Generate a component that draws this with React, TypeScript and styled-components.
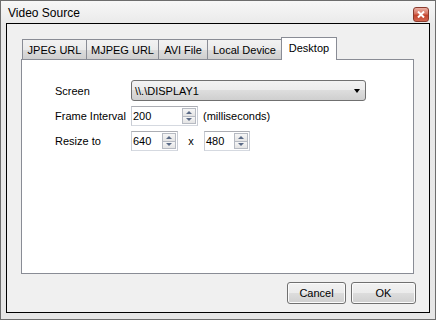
import React from "react"
import styled, { createGlobalStyle } from "styled-components"

const GlobalStyle = createGlobalStyle`
    html, body {
        margin: 0;
        padding: 0;
    }
    body {
        font-family: "Liberation Sans", Arial, sans-serif;
        font-size: 11px;
        color: #000;
    }
`

const Window = styled.div`
    width: 436px;
    height: 320px;
    box-sizing: border-box;
    border: 1px solid #6d6d6d;
    background: linear-gradient(#f7f7f7, #e9e9e9 24px, #e6e6e6);
    display: flex;
    flex-direction: column;
`
const TitleBar = styled.div`
    height: 22px;
    box-sizing: border-box;
    display: flex;
    align-items: flex-start;
    justify-content: space-between;
    padding: 5px 6px 0 7px;
    font-size: 12px;
`
const CloseButton = styled.div`
    width: 16px;
    height: 15px;
    margin-top: 1px;
    box-sizing: border-box;
    border: 1px solid #8a3b2e;
    border-radius: 3px;
    background: linear-gradient(#eab0a4, #d6705e 45%, #c3432c 55%, #d2654f);
    display: flex;
    align-items: center;
    justify-content: center;
`
const Client = styled.div`
    flex: 1;
    margin: 0 5px 6px 5px;
    border: 1px solid #000;
    background: #f0f0f0;
    display: flex;
    flex-direction: column;
    padding: 13px 15px 8px 14px;
`
const TabStrip = styled.div`
    height: 22px;
    display: flex;
    align-items: flex-end;
    padding-left: 1px;
    position: relative;
    z-index: 1;
`
const Tab = styled.div<{ $w: number; $active?: boolean }>`
    width: ${(p) => p.$w}px;
    height: ${(p) => (p.$active ? 23 : 20)}px;
    margin-bottom: ${(p) => (p.$active ? -1 : 0)}px;
    box-sizing: border-box;
    border: 1px solid #898c95;
    border-bottom: none;
    margin-left: -1px;
    background: ${(p) =>
        p.$active ? "#fff" : "linear-gradient(#f2f2f2, #ebebeb 50%, #dddddd 50%, #cfcfcf)"};
    display: flex;
    align-items: center;
    justify-content: center;
    padding-bottom: ${(p) => (p.$active ? 3 : 0)}px;
    &:first-child {
        margin-left: 0;
    }
`
const Panel = styled.div`
    flex: 1;
    border: 1px solid #898c95;
    background: #fff;
    padding: 20px 0 0 33px;
`
const Form = styled.div`
    display: grid;
    grid-template-columns: 76px auto;
    row-gap: 5px;
    align-items: center;
`
const Row = styled.div`
    display: flex;
    align-items: center;
`
const Combo = styled.div`
    width: 235px;
    height: 21px;
    box-sizing: border-box;
    border: 1px solid #707070;
    border-radius: 3px;
    background: linear-gradient(#f2f2f2, #ebebeb 50%, #dddddd 50%, #cfcfcf);
    display: flex;
    align-items: center;
    justify-content: space-between;
    padding: 0 5px 0 3px;
`
const Arrow = styled.div`
    width: 0;
    height: 0;
    border-left: 3.5px solid transparent;
    border-right: 3.5px solid transparent;
    border-top: 4px solid #000;
`
const SpinBox = styled.div<{ $w: number }>`
    width: ${(p) => p.$w}px;
    height: 20px;
    box-sizing: border-box;
    border: 1px solid;
    border-color: #abadb3 #c8ccd4 #d5d9e0 #c8ccd4;
    background: #fff;
    display: flex;
    align-items: stretch;
    padding: 1px;
`
const SpinValue = styled.div`
    flex: 1;
    display: flex;
    align-items: center;
`
const Spinner = styled.div`
    width: 14px;
    display: flex;
    flex-direction: column;
`
const SpinHalf = styled.div<{ $down?: boolean }>`
    flex: 1;
    box-sizing: border-box;
    border: 1px solid #b6bac2;
    ${(p) => (p.$down ? "border-top: none;" : "")}
    background: linear-gradient(#f6f6f6, #e4e4e4);
    display: flex;
    align-items: center;
    justify-content: center;
`
const Tri = styled.div<{ $down?: boolean }>`
    width: 0;
    height: 0;
    border-left: 3px solid transparent;
    border-right: 3px solid transparent;
    ${(p) => (p.$down ? "border-top: 3px solid #5a6a86;" : "border-bottom: 3px solid #5a6a86;")}
`
const Unit = styled.span`
    margin-left: 5px;
`
const Times = styled.span`
    width: 26px;
    text-align: center;
`
const Footer = styled.div`
    display: flex;
    justify-content: flex-end;
    gap: 5px;
    margin: 8px -2px 0 0;
`
const Button = styled.div<{ $w: number }>`
    width: ${(p) => p.$w}px;
    height: 22px;
    box-sizing: border-box;
    border: 1px solid #707070;
    border-radius: 3px;
    background: linear-gradient(#f2f2f2, #ebebeb 50%, #dddddd 50%, #cfcfcf);
    box-shadow: inset 0 0 0 1px #fbfbfb;
    display: flex;
    align-items: center;
    justify-content: center;
`

function Spin({ value, width }: { value: string; width: number }) {
    return (
        <SpinBox $w={width}>
            <SpinValue>{value}</SpinValue>
            <Spinner>
                <SpinHalf><Tri /></SpinHalf>
                <SpinHalf $down><Tri $down /></SpinHalf>
            </Spinner>
        </SpinBox>
    )
}

const tabs = [
    { name: "JPEG URL", w: 65 },
    { name: "MJPEG URL", w: 73 },
    { name: "AVI File", w: 50 },
    { name: "Local Device", w: 75 },
    { name: "Desktop", w: 56, active: true },
]

export default function App() {
    return (
        <>
            <GlobalStyle />
            <Window>
                <TitleBar>
                    <span>Video Source</span>
                    <CloseButton>
                        <svg width="8" height="7" viewBox="0 0 8 7">
                            <path d="M1 0.5 L7 6.5 M7 0.5 L1 6.5" stroke="#fff" strokeWidth="2" />
                        </svg>
                    </CloseButton>
                </TitleBar>
                <Client>
                    <TabStrip>
                        {tabs.map((t) => (
                            <Tab key={t.name} $w={t.w} $active={t.active}>{t.name}</Tab>
                        ))}
                    </TabStrip>
                    <Panel>
                        <Form>
                            <span>Screen</span>
                            <Combo>
                                <span>{"\\\\.\\DISPLAY1"}</span>
                                <Arrow />
                            </Combo>
                            <span>Frame Interval</span>
                            <Row>
                                <Spin value="200" width={67} />
                                <Unit>(milliseconds)</Unit>
                            </Row>
                            <span>Resize to</span>
                            <Row>
                                <Spin value="640" width={47} />
                                <Times>x</Times>
                                <Spin value="480" width={46} />
                            </Row>
                        </Form>
                    </Panel>
                    <Footer>
                        <Button $w={59}>Cancel</Button>
                        <Button $w={65}>OK</Button>
                    </Footer>
                </Client>
            </Window>
        </>
    )
}
